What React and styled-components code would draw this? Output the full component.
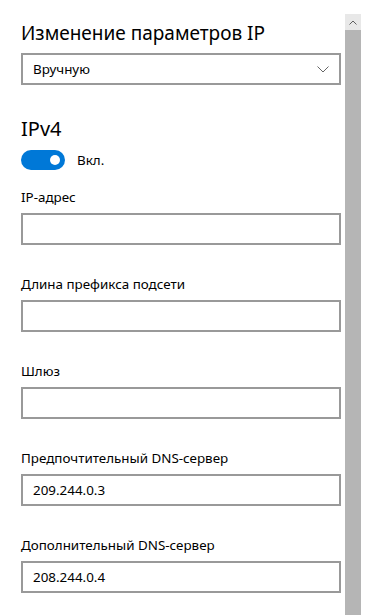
import styled, { createGlobalStyle } from "styled-components";

const GlobalStyle = createGlobalStyle`
html, body {
    margin: 0;
    padding: 0;
    background: #ffffff;
}
body {
    font-family: "Noto Sans", "Open Sans", sans-serif;
    color: #000000;
}
`

const Page = styled.div`
display: flex;
align-items: flex-start;
gap: 4px;
padding-left: 21px;
height: 615px;
overflow: hidden;
`
const Content = styled.div`
width: 320px;
display: flex;
flex-direction: column;
`
const Title = styled.h1`
margin: 19px 0 0;
font-size: 19px;
line-height: 28px;
font-weight: 400;
`
const Select = styled.div`
margin-top: 6px;
height: 32px;
box-sizing: border-box;
border: 2px solid #999999;
display: flex;
align-items: center;
justify-content: space-between;
padding: 0 10px 0 10px;
font-size: 13.4px;
`
const SectionTitle = styled.h2`
margin: 30px 0 0;
font-size: 20px;
line-height: 28px;
font-weight: 400;
`
const ToggleRow = styled.div`
margin-top: 7px;
display: flex;
align-items: center;
gap: 12px;
font-size: 13.4px;
`
const Toggle = styled.div`
width: 44px;
height: 20px;
border-radius: 10px;
background: #0078d7;
display: flex;
align-items: center;
justify-content: flex-end;
padding-right: 5px;
box-sizing: border-box;
&::after {
    content: "";
    width: 10px;
    height: 10px;
    border-radius: 50%;
    background: #ffffff;
}
`
const Field = styled.div`
margin-top: ${p => p.$first ? "17px" : "29px"};
display: flex;
flex-direction: column;
gap: 6px;
`
const Label = styled.label`
font-size: 13.4px;
line-height: 20px;
`
const Input = styled.div`
height: 32px;
box-sizing: border-box;
border: 2px solid #999999;
display: flex;
align-items: center;
padding-left: 10px;
font-size: 13.4px;
`
const Scrollbar = styled.div`
width: 16px;
margin-top: 14px;
height: 601px;
display: flex;
flex-direction: column;
`
const ArrowUp = styled.div`
height: 16px;
background: #e8e8e8;
display: flex;
align-items: center;
justify-content: center;
`
const Thumb = styled.div`
flex: 1;
background: #b5b5b5;
`

const fields = [
    { label: "IP-адрес", value: "" },
    { label: "Длина префикса подсети", value: "" },
    { label: "Шлюз", value: "" },
    { label: "Предпочтительный DNS-сервер", value: "209.244.0.3" },
    { label: "Дополнительный DNS-сервер", value: "208.244.0.4" },
]

export default function App(){
    return (
        <>
            <GlobalStyle />
            <Page>
                <Content>
                    <Title>Изменение параметров IP</Title>
                    <Select>
                        <span>Вручную</span>
                        <svg width="12" height="7" viewBox="0 0 12 7">
                            <polyline points="0.5,0.5 6,6 11.5,0.5" fill="none" stroke="#666" strokeWidth="1" />
                        </svg>
                    </Select>
                    <SectionTitle>IPv4</SectionTitle>
                    <ToggleRow>
                        <Toggle />
                        <span>Вкл.</span>
                    </ToggleRow>
                    {fields.map((f, i) => (
                        <Field key={f.label} $first={i === 0}>
                            <Label>{f.label}</Label>
                            <Input>{f.value}</Input>
                        </Field>
                    ))}
                </Content>
                <Scrollbar>
                    <ArrowUp>
                        <svg width="8" height="5" viewBox="0 0 8 5">
                            <polyline points="0.5,4.5 4,1 7.5,4.5" fill="none" stroke="#606060" strokeWidth="1" />
                        </svg>
                    </ArrowUp>
                    <Thumb />
                </Scrollbar>
            </Page>
        </>
    )
}
